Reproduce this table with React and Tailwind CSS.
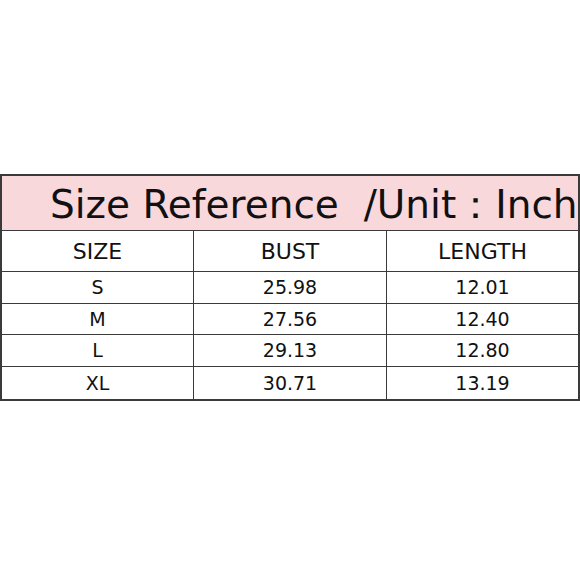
const rows = [
	["S", "25.98", "12.01", "h-[32px]"],
	["M", "27.56", "12.40", "h-[31px]"],
	["L", "29.13", "12.80", "h-[32px]"],
	["XL", "30.71", "13.19", "h-[32px]"],
];

const Cell = ({ children, last, className = "" }) => {
	return (
		<div className={`flex items-center justify-center ${last ? "" : "border-r border-[#3a3a3a]"} ${className}`}>
			{children}
		</div>
	)
}

export default function App() {
	return (
		<div className="w-[580px] h-[580px] bg-white pt-[174px] overflow-hidden" style={{ fontFamily: '"DejaVu Sans", sans-serif' }}>
			<div className="w-[580px] border-2 border-[#3a3a3a] text-[#111]">
				{/* titulo */}
				<div className="h-[55px] bg-[#f9d8dc] border-b border-[#3a3a3a] pl-[48px] flex items-center whitespace-nowrap overflow-hidden">
					<span className="text-[39px] leading-none pt-[2px]">Size Reference&nbsp;&nbsp;/Unit：Inch</span>
				</div>
				<div className="grid grid-cols-[192px_193px_1fr] h-[41px] border-b border-[#3a3a3a] text-[22px]">
					<Cell>SIZE</Cell>
					<Cell>BUST</Cell>
					<Cell last>LENGTH</Cell>
				</div>
				{rows.map((r, i) => (
					<div key={i} className={`grid grid-cols-[192px_193px_1fr] ${r[3]} ${i < rows.length - 1 ? "border-b border-[#3a3a3a]" : ""} text-[19px]`}>
						<Cell>{r[0]}</Cell>
						<Cell>{r[1]}</Cell>
						<Cell last>{r[2]}</Cell>
					</div>
				))}
			</div>
		</div>
	)
}
